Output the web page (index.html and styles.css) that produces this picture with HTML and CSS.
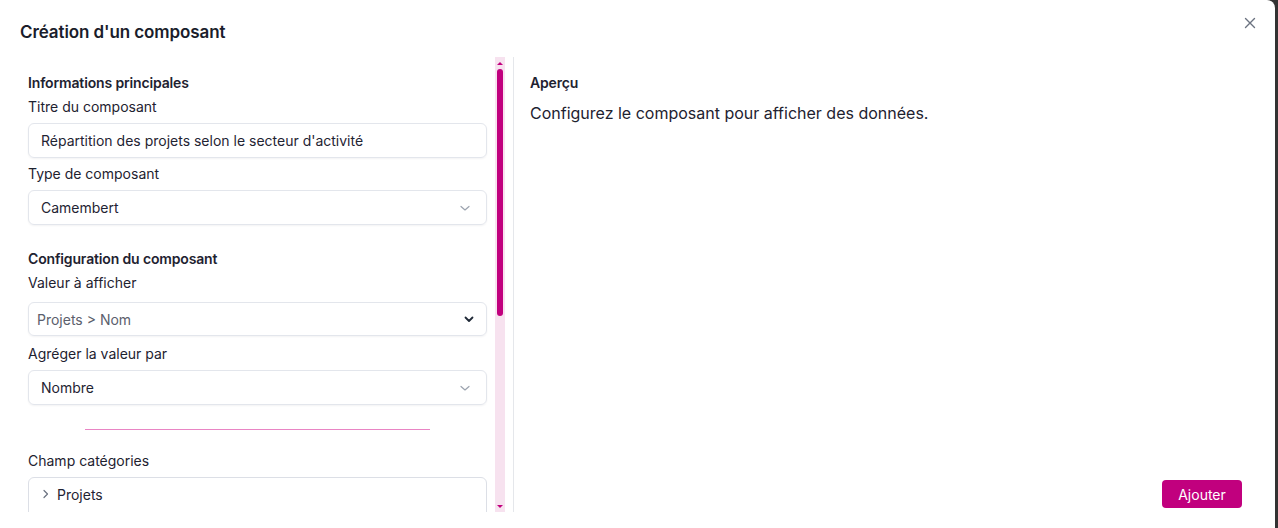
FILE: index.html
```html
<!DOCTYPE html>
<html lang="fr">
<head>
    <meta charset="UTF-8">
    <meta name="viewport" content="width=device-width, initial-scale=1.0">
    <title>Création d'un composant</title>
    <link rel="stylesheet" href="styles.css">
</head>
<body>
    <div class="dialog">
        <header class="dialog-header">
            <h2 class="dialog-title">Création d'un composant</h2>
            <button type="button" class="close-btn" aria-label="Fermer">
                <svg width="12" height="12" viewBox="0 0 12 12"><path d="M1.5 1.5 L10.5 10.5 M10.5 1.5 L1.5 10.5" stroke="#6b7280" stroke-width="1.4" stroke-linecap="round"/></svg>
            </button>
        </header>

        <div class="dialog-body">
            <!-- Colonne de configuration -->
            <div class="config-col">
                <div class="config-scroll">
                    <h3 class="section-title">Informations principales</h3>
                    <label class="field-label">Titre du composant</label>
                    <div class="field">Répartition des projets selon le secteur d'activité</div>

                    <label class="field-label">Type de composant</label>
                    <div class="field field-select">
                        <span>Camembert</span>
                        <svg class="chevron" width="12" height="12" viewBox="0 0 12 12"><path d="M2 4.5 L6 8 L10 4.5" fill="none" stroke="#9ca3af" stroke-width="1.2" stroke-linecap="round" stroke-linejoin="round"/></svg>
                    </div>

                    <h3 class="section-title section-gap">Configuration du composant</h3>
                    <label class="field-label">Valeur à afficher</label>
                    <div class="field field-native">
                        <span>Projets &gt; Nom</span>
                        <svg class="chevron" width="12" height="12" viewBox="0 0 12 12"><path d="M2.5 4.5 L6 8 L9.5 4.5" fill="none" stroke="#1f2937" stroke-width="1.8" stroke-linecap="round" stroke-linejoin="round"/></svg>
                    </div>

                    <label class="field-label">Agréger la valeur par</label>
                    <div class="field field-select">
                        <span>Nombre</span>
                        <svg class="chevron" width="12" height="12" viewBox="0 0 12 12"><path d="M2 4.5 L6 8 L10 4.5" fill="none" stroke="#9ca3af" stroke-width="1.2" stroke-linecap="round" stroke-linejoin="round"/></svg>
                    </div>

                    <div class="divider"></div>

                    <label class="field-label">Champ catégories</label>
                    <div class="tree">
                        <div class="tree-row">
                            <svg width="10" height="12" viewBox="0 0 10 12"><path d="M3 2.5 L6.5 6 L3 9.5" fill="none" stroke="#6b7280" stroke-width="1.2" stroke-linecap="round" stroke-linejoin="round"/></svg>
                            <span>Projets</span>
                        </div>
                    </div>
                </div>

                <!-- Barre de défilement -->
                <div class="scrollbar">
                    <span class="arrow arrow-up"></span>
                    <span class="thumb"></span>
                    <span class="arrow arrow-down"></span>
                </div>
            </div>

            <!-- Aperçu -->
            <div class="preview-col">
                <h3 class="section-title">Aperçu</h3>
                <p class="preview-text">Configurez le composant pour afficher des données.</p>
                <div class="actions">
                    <button type="button" class="btn-primary">Ajouter</button>
                </div>
            </div>
        </div>
    </div>
</body>
</html>
```

FILE: styles.css
```css
* {
    box-sizing: border-box;
}
body {
    margin: 0;
    height: 528px;
    overflow: hidden;
    background-color: #333333; /* fond de la modale */
    font-family: 'Inter', 'Noto Sans', sans-serif;
    color: #1e2230;
}
.dialog {
    width: 1275px;
    height: 528px;
    background-color: #ffffff;
    border-top-right-radius: 8px;
    display: flex;
    flex-direction: column;
}
.dialog-header {
    height: 57px;
    display: flex;
    justify-content: space-between;
    align-items: flex-start;
    padding: 0 19px 0 20px;
}
.dialog-title {
    margin: 21px 0 0;
    font-size: 17px;
    line-height: 22px;
    font-weight: 600;
    letter-spacing: -0.1px;
    color: #1a1d2b;
}
.close-btn {
    margin-top: 17px;
    width: 12px;
    height: 12px;
    padding: 0;
    border: none;
    background: none;
    display: flex;
}
.dialog-body {
    display: flex;
    height: 455px;
    padding: 0 20px;
}
.config-col {
    width: 485px;
    display: flex;
}
.config-scroll {
    flex: 1;
    overflow: hidden;
    padding: 16px 8px 0 8px;
}
.section-title {
    margin: 0 0 4px;
    font-size: 14px;
    line-height: 20px;
    font-weight: 600;
    letter-spacing: -0.15px;
    color: #1e2230;
}
.section-gap {
    margin-top: 24px;
}
.field-label {
    display: block;
    font-size: 14px;
    line-height: 20px;
    margin-bottom: 6px;
    color: #1e2230;
}
.field {
    height: 35px;
    border: 1px solid #e3e6ec;
    border-radius: 6px;
    box-shadow: 0 1px 2px rgba(16, 24, 40, 0.05);
    padding: 0 12px;
    font-size: 14px;
    display: flex;
    align-items: center;
    color: #1f2433;
    margin-bottom: 6px;
}
.field-select {
    justify-content: space-between;
}
.field-select .chevron {
    margin-right: 3px;
}
.field-native {
    height: 34px;
    margin-top: 9px;
    margin-bottom: 8px;
    padding: 0 8px;
    justify-content: space-between;
    color: #5b606c;
}
.field-native .chevron {
    margin-right: 3px;
}
.divider {
    width: 75%;
    height: 1px;
    margin: 24px auto 21px;
    background-color: #e985c4;
}
.tree {
    border: 1px solid #dcdfe6;
    border-radius: 6px;
    padding: 5px 12px 12px;
}
.tree-row {
    display: flex;
    align-items: center;
    gap: 6px;
    height: 22px;
    font-size: 14px;
    color: #1f2433;
}
.scrollbar {
    width: 10px;
    background-color: #f7e2ef;
    display: flex;
    flex-direction: column;
    align-items: center;
}
.arrow {
    width: 0;
    height: 0;
    border-left: 3px solid transparent;
    border-right: 3px solid transparent;
}
.arrow-up {
    margin-top: 5px;
    border-bottom: 3px solid #c1007e;
}
.thumb {
    width: 6px;
    height: 247px;
    margin-top: 4px;
    border-radius: 3px;
    background-color: #c1007e;
}
.arrow-down {
    margin-top: auto;
    margin-bottom: 4px;
    border-top: 3px solid #c1007e;
}
.preview-col {
    flex: 1;
    margin-left: 8px;
    border-left: 1px solid #e5e7eb;
    padding: 16px 13px 4px 16px;
    display: flex;
    flex-direction: column;
}
.preview-text {
    margin: 4px 0 0;
    font-size: 16px;
    line-height: 24px;
    color: #1e2230;
}
.actions {
    margin-top: auto;
    display: flex;
    justify-content: flex-end;
}
.btn-primary {
    width: 80px;
    height: 28px;
    border: none;
    border-radius: 4px;
    background-color: #c1007e;
    color: #ffffff;
    font-family: inherit;
    font-size: 14px;
    cursor: pointer;
}
```
